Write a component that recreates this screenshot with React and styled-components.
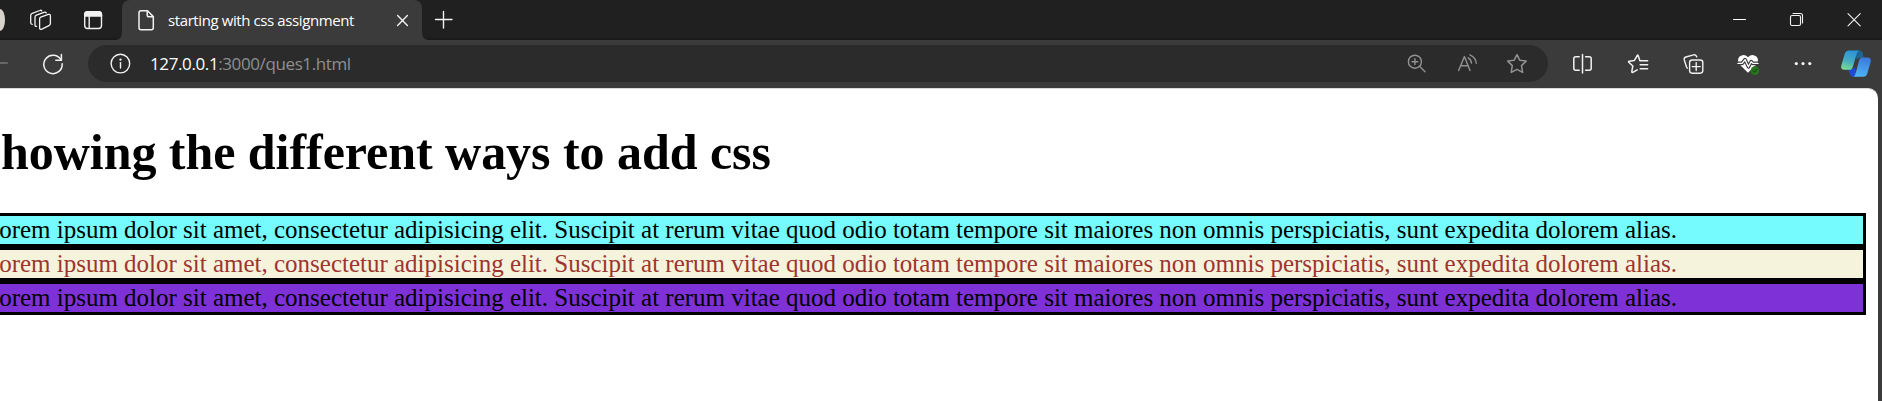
import React from "react";
import styled, { createGlobalStyle } from "styled-components";

const GlobalStyle = createGlobalStyle`
  * { box-sizing: border-box; }
  html, body { margin: 0; background: #3b3b3b; overflow: hidden; }
`;

const Window = styled.div`
  width: 1882px;
  height: 401px;
  display: flex;
  flex-direction: column;
  overflow: hidden;
  background: #3b3b3b;
  font-family: "Open Sans", "Noto Sans", sans-serif;
`;

const TabStrip = styled.header`
  height: 40px;
  flex: none;
  display: flex;
  align-items: center;
  background: #202020;
  box-shadow: inset 0 -2px 2px -1px #181818;
`;

const Avatar = styled.div`
  width: 5px;
  height: 22px;
  flex: none;
  background: #d6d3cc;
  border-radius: 0 5px 5px 0 / 0 11px 11px 0;
`;

const Icon = styled.svg`
  width: ${(p) => p.$w || 24}px;
  height: ${(p) => p.$h || 24}px;
  margin-left: ${(p) => p.$gap || 0}px;
  flex: none;
  display: block;
  fill: none;
  stroke: ${(p) => p.$color || "#f2f2f2"};
  stroke-width: ${(p) => p.$weight || 1.4};
  stroke-linecap: round;
  stroke-linejoin: round;
`;

const Tab = styled.div`
  width: 300px;
  height: 40px;
  margin-left: 17px;
  padding: 0 7px 0 12px;
  flex: none;
  display: flex;
  align-items: center;
  background: #3b3b3b;
  border-radius: 8px 8px 0 0;
  position: relative;

  &::before, &::after {
    content: "";
    position: absolute;
    bottom: 0;
    width: 6px;
    height: 6px;
  }
  &::before {
    left: -6px;
    background: radial-gradient(circle at 0 0, transparent 5.5px, #3b3b3b 6px);
  }
  &::after {
    right: -6px;
    background: radial-gradient(circle at 100% 0, transparent 5.5px, #3b3b3b 6px);
  }
`;

const TabTitle = styled.span`
  margin-left: 10px;
  flex: 1;
  color: #fff;
  font-size: 15px;
  line-height: 20px;
  letter-spacing: -0.4px;
  white-space: nowrap;
`;

const WindowControls = styled.div`
  margin-left: auto;
  margin-right: 16px;
  display: flex;
  gap: 33px;
`;

const Toolbar = styled.nav`
  height: 48px;
  flex: none;
  padding-bottom: 1px;
  display: flex;
  align-items: center;
`;

const AddressBar = styled.div`
  width: 1460px;
  height: 37px;
  margin-left: 23px;
  padding: 0 19px 0 20px;
  flex: none;
  display: flex;
  align-items: center;
  background: #2b2b2b;
  border-radius: 19px;
`;

const Url = styled.span`
  margin-left: 18px;
  flex: 1;
  color: #8f8f8f;
  font-size: 17px;
  line-height: 24px;
  letter-spacing: -0.39px;
  white-space: nowrap;
`;

const Host = styled.span`
  color: #fff;
`;

const Page = styled.main`
  width: 1878px;
  flex: 1;
  padding-right: 12px;
  background: #fff;
  border-top: 1px solid #dcdcdc;
  border-top-right-radius: 10px;
  color: #000;
  font-family: "Liberation Serif", "Times New Roman", serif;
`;

const Heading = styled.h1`
  margin: 35px 0 33px;
  padding-left: 1px;
  font-size: 50px;
  line-height: 56px;
  font-weight: 700;
  letter-spacing: -0.04px;
  font-variant-ligatures: none;
  white-space: nowrap;
`;

const Paragraph = styled.p`
  height: 34px;
  margin: 0;
  border: 3px solid #000;
  border-left: 0;
  background: ${(p) => p.$bg};
  color: ${(p) => p.$ink || "#000"};
  font-size: 25px;
  line-height: 27px;
  letter-spacing: -0.006px;
  text-indent: -0.8px;
  white-space: nowrap;
`;

const lorem =
  "orem ipsum dolor sit amet, consectetur adipisicing elit. Suscipit at rerum vitae quod odio totam tempore sit maiores non omnis perspiciatis, sunt expedita dolorem alias.";

const Workspaces = () => (
  <Icon $gap={23} viewBox="0 0 24 24" $weight={1.3}>
    <path d="M12.7 9.2 20.4 6.4Q22.4 5.9 22.4 8V15.6Q22.4 17 21 17.6L13.8 21.2Q11.6 22 11.6 19.8V11Q11.6 9.6 12.7 9.2Z" />
    <path d="M18.3 4.9Q17.6 3.7 16 4.3L8.4 7.2Q7 7.8 7 9.2V17.2Q7 18.6 8.6 18.4" />
    <path d="M13.8 3Q13.2 1.9 11.8 2.5L4.2 5.4Q2.7 6 2.7 7.5V14.8Q2.7 16.3 4.2 16.4" />
  </Icon>
);

const TabActions = () => (
  <Icon $gap={29} viewBox="0 0 24 24">
    <rect x="3.7" y="3.7" width="16.8" height="16.8" rx="3" />
    <path d="M3.7 8V6.7a3 3 0 0 1 3-3h10.8a3 3 0 0 1 3 3V8Z" fill="#f2f2f2" />
    <path d="M8.2 8V20" />
  </Icon>
);

const Document = () => (
  <Icon viewBox="0 0 24 24" $weight={1.5}>
    <path d="M13.5 2.8H7a2 2 0 0 0-2 2v14.9a2 2 0 0 0 2 2h10.3a2 2 0 0 0 2-2V8.6Z" />
    <path d="M13.2 3v4a1.8 1.8 0 0 0 1.8 1.8h4" />
  </Icon>
);

const Refresh = () => (
  <Icon $h={25} $gap={33} viewBox="0 0 24 25" $weight={1.5}>
    <path d="M20.2 9.2A9.2 9.2 0 1 0 21.2 12.8" />
    <path d="M20.4 3.6V9.2H14.8" />
  </Icon>
);

const Info = () => (
  <Icon $h={25} viewBox="0 0 24 25">
    <circle cx="12.4" cy="12.6" r="9.3" />
    <path d="M12.5 11.6V17" />
    <circle cx="12.5" cy="8.6" r=".5" fill="#fff" />
  </Icon>
);

const Zoom = () => (
  <Icon $h={25} viewBox="0 0 24 25" $color="#929292">
    <circle cx="10.9" cy="10.7" r="6.5" />
    <path d="M15.8 15.6 21 20.7M10.9 7.8v5.8M8 10.7h5.8" />
  </Icon>
);

const ReadAloud = () => (
  <Icon $h={25} $gap={27} viewBox="0 0 24 25" $color="#929292">
    <path d="M3.6 19.6 9.4 5.6 15 19.6M5.8 14.7h7.3" />
    <path d="M13.2 6.8Q16.2 8.6 16.5 12.1M15 3.8Q20.8 6.5 21.3 12.3" />
  </Icon>
);

const Star = () => (
  <Icon $h={25} $gap={26} viewBox="0 0 24 25" $color="#929292" $weight={1.5}>
    <path d="M12 3.7 14.7 9.2 21.2 10.1 16.5 14.6 17.6 21.4 12 18.3 6.2 21.4 7.3 14.6 2.7 10.1 9.2 9.2Z" />
  </Icon>
);

const SplitScreen = () => (
  <Icon $h={25} $gap={22} viewBox="0 0 24 25" $weight={1.5}>
    <path d="M9.2 5.7H5.8a2 2 0 0 0-2 2v9.6a2 2 0 0 0 2 2h3.4M15.6 5.7h3.6a2 2 0 0 1 2 2v9.6a2 2 0 0 1-2 2h-3.6M12.5 3.4V22" />
  </Icon>
);

const Favorites = () => (
  <Icon $h={25} $gap={31} viewBox="0 0 24 25" $weight={1.5}>
    <path d="M17 9.7H14.9L13.1 4.5Q12.7 3.6 12.3 4.5L9.4 9.4 4.1 10.2Q3.1 10.5 3.8 11.2L7.8 15 6.8 20.7Q6.8 21.8 7.8 21.3L12.2 18.9M17 9.7H22.6M15.2 13.7H22.6M15.2 17.7H22.6" />
  </Icon>
);

const Collections = () => (
  <Icon $h={25} $gap={32} viewBox="0 0 24 25">
    <rect x="8.6" y="9" width="13.2" height="13.2" rx="2.6" />
    <path d="M15.2 11.6v8M11.2 15.6h8" />
    <path d="M15.8 5.9 15.2 4.9Q14.4 3.3 12.6 3.8L4.9 6Q2.7 6.8 3.3 9L5.6 16.2Q5.9 16.9 6.4 17.2" />
  </Icon>
);

const pulse = "M1 12.4H5.2L8 8.6 11.4 15.8 14.2 10.6 15.8 12.4H21";

const Essentials = () => (
  <Icon $h={25} $gap={32} viewBox="0 0 24 25">
    <path
      d="M11 21.7 2.6 13.4Q-.6 8.8 2.6 5.6 7 2.2 11 6.2 15 2.2 19.4 5.6 22.6 8.8 19.4 13.4Z"
      fill="#fff"
      stroke="none"
    />
    <path d={pulse} stroke="#3b3b3b" strokeWidth="3.6" />
    <path d={pulse} stroke="#fff" strokeWidth="1.3" />
    <circle cx="18" cy="19.6" r="4.3" fill="#2a731f" stroke="none" />
    <path d="m16.1 19.7 1.4 1.3 2.6-2.7" stroke="#174d10" strokeWidth="1.1" />
  </Icon>
);

const More = () => (
  <Icon $h={25} $gap={30} viewBox="0 0 24 25">
    <g fill="#f2f2f2" stroke="none">
      <circle cx="5.3" cy="12.6" r="1.6" />
      <circle cx="12" cy="12.6" r="1.6" />
      <circle cx="18.8" cy="12.6" r="1.6" />
    </g>
  </Icon>
);

const Copilot = () => (
  <Icon $w={30} $h={27} $gap={26} viewBox="0 0 30 27">
    <defs>
      <linearGradient id="leafLeft" x1="0.6" y1="0" x2="0.3" y2="1">
        <stop offset="0" stopColor="#2b93d8" />
        <stop offset=".55" stopColor="#45acc0" />
        <stop offset="1" stopColor="#7cdc92" />
      </linearGradient>
      <linearGradient id="leafRight" x1="0.6" y1="0" x2="0.4" y2="1">
        <stop offset="0" stopColor="#3b78da" />
        <stop offset="1" stopColor="#4fb4f5" />
      </linearGradient>
    </defs>
    <g stroke="none">
      <path d="M14 .6H18.6Q20.8 .6 21.6 3L22.8 7.8H19Q16.6 7.8 15.8 10Z" fill="#1d6693" />
      <path d="M7 19H11Q13 19 13.6 16.8L16 26.8H12Q9.6 26.8 8.8 24Z" fill="#2149d8" />
      <path d="M7.8 .6H18Q16.4 1.2 15.6 4L12 16.4Q11 19.8 8.4 19.8H3.4Q-.6 19.8 .3 15.6L3.6 4.2Q4.8 .6 7.8 .6Z" fill="url(#leafLeft)" />
      <path d="M22.4 26.8H12.2Q13.8 26.2 14.6 23.4L18 10.7Q18.9 7.4 21.6 7.4H26.6Q30.6 7.6 29.7 11.8L26.4 23.2Q25.3 26.8 22.4 26.8Z" fill="url(#leafRight)" />
    </g>
  </Icon>
);

export default function App() {
  return (
    <>
      <GlobalStyle />
      <Window>
        <TabStrip>
          <Avatar />
          <Workspaces />
          <TabActions />
          <Tab>
            <Document />
            <TabTitle>starting with css assignment</TabTitle>
            <Icon viewBox="0 0 24 24">
              <path d="m6.6 7.6 9.8 9.8m0-9.8-9.8 9.8" />
            </Icon>
          </Tab>
          <Icon $gap={10} viewBox="0 0 24 24">
            <path d="M3.5 11.5h16.5M11.5 3.5v16.5" />
          </Icon>
          <WindowControls>
            <Icon viewBox="0 0 24 24" $weight={1}>
              <path d="M5.5 11.5H17.5" stroke="#fff" />
            </Icon>
            <Icon viewBox="0 0 24 24" $weight={1.1}>
              <rect x="5.5" y="7.5" width="10" height="10" rx="1.5" />
              <path d="M8 5.5H15.5a2 2 0 0 1 2 2V15" />
            </Icon>
            <Icon viewBox="0 0 24 24" $weight={1.1}>
              <path d="M6 5.6 18.2 17.8M18.2 5.6 6 17.8" />
            </Icon>
          </WindowControls>
        </TabStrip>
        <Toolbar>
          <Icon $w={8} $h={25} viewBox="0 0 8 25" $color="#777">
            <path d="M0 12H7.3" />
          </Icon>
          <Refresh />
          <AddressBar>
            <Info />
            <Url><Host>127.0.0.1</Host>:3000/ques1.html</Url>
            <Zoom />
            <ReadAloud />
            <Star />
          </AddressBar>
          <SplitScreen />
          <Favorites />
          <Collections />
          <Essentials />
          <More />
          <Copilot />
        </Toolbar>
        <Page>
          <Heading>howing the different ways to add css</Heading>
          <Paragraph $bg="#75fbfd">{lorem}</Paragraph>
          <Paragraph $bg="#f5f3dc" $ink="#9d3530">{lorem}</Paragraph>
          <Paragraph $bg="#7f31d8">{lorem}</Paragraph>
        </Page>
      </Window>
    </>
  );
}
